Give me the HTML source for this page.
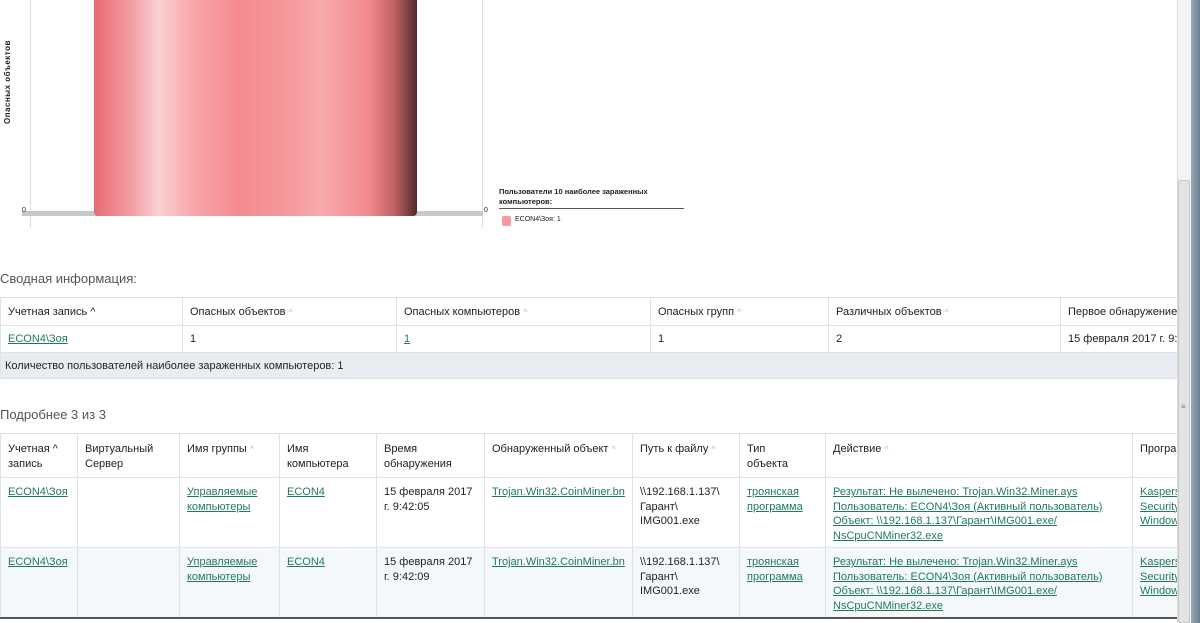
<!DOCTYPE html>
<html><head><meta charset="utf-8"><style>
*{margin:0;padding:0;box-sizing:border-box}
body{width:1200px;height:623px;overflow:hidden;background:#fff;font-family:"Liberation Sans","DejaVu Sans",sans-serif;font-size:11px;color:#222;position:relative}
.a{position:absolute}
a{color:#1f7a5c;text-decoration:underline}
table{border-collapse:collapse;position:absolute;table-layout:fixed}
td{border:1px solid #dfe3e6;padding:0 7px;vertical-align:top}
.ar{color:#bbb;font-size:9px}
.ttl{font-size:13px;color:#555}
</style></head><body>
<div class="a" style="left:30px;top:0;width:1px;height:228px;background:#ddd"></div>
<div class="a" style="left:482px;top:0;width:1px;height:228px;background:#ddd"></div>
<div class="a" style="left:22px;top:211px;width:461px;height:5px;background:#c8c8c8"></div>
<div class="a" style="left:94px;top:0;width:323px;height:216px;border-radius:0 0 4px 4px;background:linear-gradient(90deg,#e76b70 0%,#f3a0a5 12%,#fbd0d3 20%,#f8a9ad 30%,#f38a8f 45%,#f59c9f 62%,#f7aaad 70%,#f28a8e 85%,#c06266 93%,#502a2c 100%)"></div>
<div class="a" style="left:3px;top:124px;transform:rotate(-90deg);transform-origin:0 0;font-size:8px;font-weight:bold;white-space:nowrap;letter-spacing:0.5px">Опасных объектов</div>
<div class="a" style="left:22px;top:207px;font-size:7px">0</div>
<div class="a" style="left:484px;top:207px;font-size:7px">0</div>
<div class="a" style="left:499px;top:187px;font-size:7.5px;font-weight:bold;line-height:10px;width:185px;border-bottom:1px solid #555;padding-bottom:1px">Пользователи 10 наиболее зараженных компьютеров:</div>
<div class="a" style="left:502px;top:216px;width:9px;height:10px;background:#f59ca0;border-radius:2px"></div>
<div class="a" style="left:515px;top:216px;font-size:7px">ECON4\Зоя: 1</div>

<div class="a ttl" style="left:0;top:271px">Сводная информация:</div>
<table style="left:0;top:297px;width:1177px">
<colgroup><col style="width:182px"><col style="width:214px"><col style="width:254px"><col style="width:178px"><col style="width:232px"><col style="width:117px"></colgroup>
<tr style="height:28px"><td style="padding-top:8px">Учетная запись ^</td><td style="padding-top:8px">Опасных объектов <span class="ar">^</span></td><td style="padding-top:8px">Опасных компьютеров <span class="ar">^</span></td><td style="padding-top:8px">Опасных групп <span class="ar">^</span></td><td style="padding-top:8px">Различных объектов <span class="ar">^</span></td><td style="padding-top:8px;white-space:nowrap;overflow:hidden">Первое обнаружение</td></tr>
<tr style="height:27px"><td style="padding-top:7px"><a>ECON4\Зоя</a></td><td style="padding-top:7px">1</td><td style="padding-top:7px"><a>1</a></td><td style="padding-top:7px">1</td><td style="padding-top:7px">2</td><td style="padding-top:7px;white-space:nowrap;overflow:hidden">15 февраля 2017 г. 9:42</td></tr>
<tr style="height:26px;background:#e9edf1"><td colspan="6" style="padding:7px 4px 0">Количество пользователей наиболее зараженных компьютеров: 1</td></tr>
</table>

<div class="a ttl" style="left:0;top:407px">Подробнее 3 из 3</div>
<table style="left:0;top:433px;width:1177px;line-height:14.5px">
<colgroup><col style="width:77px"><col style="width:102px"><col style="width:100px"><col style="width:97px"><col style="width:108px"><col style="width:148px"><col style="width:107px"><col style="width:86px"><col style="width:307px"><col style="width:45px"></colgroup>
<tr style="height:44px"><td style="padding-top:8px">Учетная ^ запись</td><td style="padding-top:8px">Виртуальный Сервер</td><td style="padding-top:8px">Имя группы <span class="ar">^</span></td><td style="padding-top:8px">Имя компьютера</td><td style="padding-top:8px">Время обнаружения</td><td style="padding-top:8px">Обнаруженный объект <span class="ar">^</span></td><td style="padding-top:8px">Путь к файлу <span class="ar">^</span></td><td style="padding-top:8px">Тип<br>объекта</td><td style="padding-top:8px">Действие <span class="ar">^</span></td><td style="padding-top:8px;white-space:nowrap;overflow:hidden">Програ</td></tr>
<tr style="height:70px"><td style="padding-top:7px"><a>ECON4\Зоя</a></td><td></td><td style="padding-top:7px"><a>Управляемые компьютеры</a></td><td style="padding-top:7px"><a>ECON4</a></td><td style="padding-top:7px">15 февраля 2017 г. 9:42:05</td><td style="padding-top:7px;white-space:nowrap"><a>Trojan.Win32.CoinMiner.bn</a></td><td style="padding-top:7px">\\192.168.1.137\ Гарант\ IMG001.exe</td><td style="padding-top:7px"><a>троянская программа</a></td><td style="padding-top:7px"><a>Результат: Не вылечено: Trojan.Win32.Miner.ays<br>Пользователь: ECON4\Зоя (Активный пользователь)<br>Объект: \\192.168.1.137\Гарант\IMG001.exe/<br>NsCpuCNMiner32.exe</a></td><td style="padding-top:7px;white-space:nowrap;overflow:hidden"><a>Kaspersky<br>Security<br>Windows</a></td></tr>
<tr style="height:70px;background:#f5f8fb;border-bottom:2px solid #555"><td style="padding-top:7px"><a>ECON4\Зоя</a></td><td></td><td style="padding-top:7px"><a>Управляемые компьютеры</a></td><td style="padding-top:7px"><a>ECON4</a></td><td style="padding-top:7px">15 февраля 2017 г. 9:42:09</td><td style="padding-top:7px;white-space:nowrap"><a>Trojan.Win32.CoinMiner.bn</a></td><td style="padding-top:7px">\\192.168.1.137\ Гарант\ IMG001.exe</td><td style="padding-top:7px"><a>троянская программа</a></td><td style="padding-top:7px"><a>Результат: Не вылечено: Trojan.Win32.Miner.ays<br>Пользователь: ECON4\Зоя (Активный пользователь)<br>Объект: \\192.168.1.137\Гарант\IMG001.exe/<br>NsCpuCNMiner32.exe</a></td><td style="padding-top:7px;white-space:nowrap;overflow:hidden"><a>Kaspersky<br>Security<br>Windows</a></td></tr>
</table>

<div class="a" style="left:1177px;top:0;width:14px;height:623px;background:#f4f4f4;border-left:1px solid #ddd"></div>
<div class="a" style="left:1178px;top:180px;width:12px;height:443px;background:#e4e4e4;border:1px solid #c8c8c8;border-radius:2px"></div>
<div class="a" style="left:1181px;top:402px;font-size:8px;color:#777">≡</div>
<div class="a" style="left:1191px;top:0;width:9px;height:623px;background:linear-gradient(90deg,#9aa9b8,#6d7f93)"></div>
</body></html>
